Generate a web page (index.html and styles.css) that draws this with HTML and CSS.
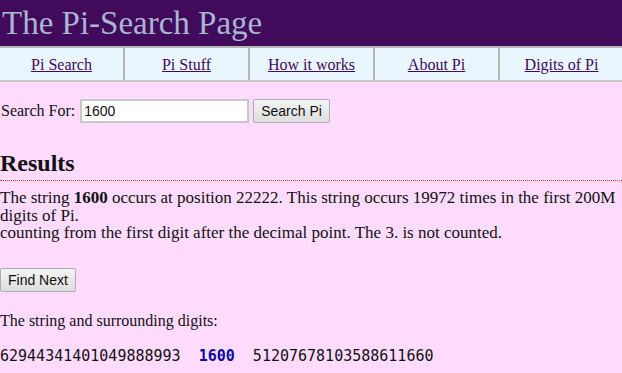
FILE: index.html
```html
<!DOCTYPE html>
<html lang="en">
<head>
    <meta charset="UTF-8">
    <title>The Pi-Search Page</title>
    <link rel="stylesheet" href="styles.css">
</head>
<body>

    <div class="header">The Pi-Search Page</div>

    <div class="nav">
        <div class="nav-item"><a href="#">Pi Search</a></div>
        <div class="nav-item"><a href="#">Pi Stuff</a></div>
        <div class="nav-item"><a href="#">How it works</a></div>
        <div class="nav-item"><a href="#">About Pi</a></div>
        <div class="nav-item"><a href="#">Digits of Pi</a></div>
    </div>

    <form class="search-form">
        <label for="query">Search For:</label>
        <input type="text" id="query" value="1600">
        <button type="button" class="btn">Search Pi</button>
    </form>

    <h2 class="results-title">Results</h2>

    <p class="result-text">
        The string <b>1600</b> occurs at position 22222. This string occurs 19972 times in the first 200M digits of Pi.<br>
        counting from the first digit after the decimal point. The 3. is not counted.
    </p>

    <button type="button" class="btn find-next">Find Next</button>

    <p class="surround-label">The string and surrounding digits:</p>

    <div class="digits">62944341401049888993&nbsp;&nbsp;<span class="hit">1600</span>&nbsp;&nbsp;51207678103588611660</div>

</body>
</html>
```

FILE: styles.css
```css
html, body { overflow: hidden; }
body {
    margin: 0;
    background-color: #ffdcff;
    font-family: "Liberation Serif", "Times New Roman", serif;
    font-size: 16px;
    color: #111;
}

.header {
    background-color: #410a5a;
    color: #a8b6d4;
    font-size: 33px;
    height: 46px;
    line-height: 46px;
    padding-left: 2px;
}

.nav {
    display: grid;
    grid-template-columns: repeat(5, 125px);
    width: 625px;
    background-color: #eaf6fd;
    border-top: 2px solid #b4b4b4;
    border-bottom: 2px solid #c8c8c8;
}
.nav-item {
    text-align: center;
    height: 32px;
    line-height: 34px;
    border-right: 2px solid #b4b4b4;
}
.nav-item a { color: #400a5a; }

.search-form {
    margin: 17px 0 0 1px;
    display: flex;
    align-items: center;
}
.search-form label { margin-right: 5px; }
.search-form input {
    width: 161px;
    height: 20px;
    border: 2px solid #c8c8c8;
    padding: 0 2px;
    font-family: "Liberation Sans", Arial, sans-serif;
    font-size: 14px;
    color: #111;
    margin-right: 4px;
}

.btn {
    height: 24px;
    padding: 0 7px;
    border: 1px solid #adadad;
    border-radius: 2px;
    background: linear-gradient(#f4f4f4, #dedede);
    font-family: "Liberation Sans", Arial, sans-serif;
    font-size: 14px;
    color: #111;
}

.results-title {
    font-size: 24px;
    margin: 26px 0 0 0;
    padding-bottom: 3px;
    border-bottom: 1px dotted #ff3030;
    line-height: 28px;
}

.result-text {
    margin: 8px 0 0 0;
    font-size: 17px;
    line-height: 17.5px;
}

.find-next { margin-top: 26px; }

.surround-label { margin: 20px 0 0 0; }

.digits {
    margin-top: 17px;
    font-family: "DejaVu Sans Mono", "Liberation Mono", monospace;
    font-size: 15px;
}
.digits .hit { color: #0a0aa0; font-weight: bold; }
```
